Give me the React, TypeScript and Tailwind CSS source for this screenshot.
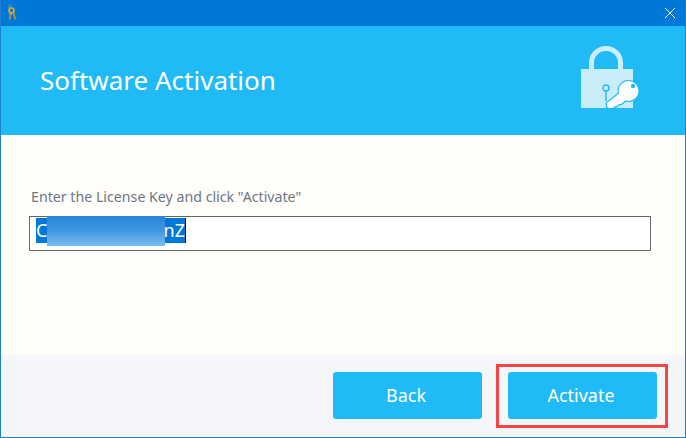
const font = { fontFamily: '"Noto Sans", "Open Sans", sans-serif' };

const KeyIcon = () => (
  <svg width="16" height="18" viewBox="0 0 16 18" className="ml-[5px]">
    <circle cx="4" cy="2.5" r="1.5" fill="none" stroke="#7d95ad" strokeWidth="1" />
    <circle cx="5.5" cy="6.5" r="2.5" fill="none" stroke="#e6a52e" strokeWidth="1.6" />
    <path d="M4 9v6.5M7.5 9l2 6.5" stroke="#c98a1f" strokeWidth="1.6" fill="none" />
    <path d="M5.5 9v2" stroke="#f2c25a" strokeWidth="0.8" fill="none" />
  </svg>
);

const keyShaft = "M41 46 L27 57 V60.5 L29 62 H33 L35 60 H37 L39 58 H41 L46 54z";

const LockIcon = () => (
  <svg width="64" height="64" viewBox="0 0 64 64" className="mt-[20px] self-start">
    <path d="M11.5 24V16.5A14.5 14 0 0 1 40.5 16.5V24" fill="none" stroke="#c9edf9" strokeWidth="5" />
    <rect x="1" y="23" width="52" height="39" fill="#c9edf9" />
    <circle cx="26" cy="42" r="3" fill="none" stroke="#20bbf6" strokeWidth="1.4" />
    <path d="M26 45v10" stroke="#20bbf6" strokeWidth="1.4" />
    <path d={keyShaft} fill="#20bbf6" stroke="#20bbf6" strokeWidth="2.5" />
    <circle cx="48.5" cy="45" r="11" fill="#20bbf6" />
    <path d={keyShaft} fill="#fff" />
    <circle cx="48.5" cy="45" r="10" fill="#fff" />
    <circle cx="53" cy="40" r="2.2" fill="#20bbf6" />
  </svg>
);

const ActionButton = ({ label }: { label: string }) => (
  <button className="w-[149px] h-[47px] pr-[3px] rounded-[3px] bg-[#20bbf6] text-white text-[18px]">
    {label}
  </button>
);

export default function App() {
  return (
    <div
      className="relative w-[686px] h-[438px] flex flex-col border-x border-b border-[#1f80d0] bg-[#fffefb] overflow-hidden"
      style={font}
    >
      <div className="h-[26px] shrink-0 flex items-center justify-between bg-[#0078d7]">
        <KeyIcon />
        <svg width="12" height="12" viewBox="0 0 12 12" className="mr-[9px]">
          <path d="M1 1l10 10M11 1L1 11" stroke="#fff" strokeWidth="1" />
        </svg>
      </div>

      <div className="h-[109px] shrink-0 flex items-center justify-between pl-[39px] pr-[41px] bg-[#20bbf6]">
        <h1 className="text-white text-[26px] font-normal">Software Activation</h1>
        <LockIcon />
      </div>

      <div className="flex-1 pt-[52px] pl-[28px] pr-[34px]">
        <p className="pl-[2px] text-[14.2px] leading-[20px] text-[#6d7684]">
          Enter the License Key and click "Activate"
        </p>
        <div className="relative mt-[9px] h-[35px] flex items-start pt-[1px] pl-[6px] border border-[#666666] bg-white">
          <span className="w-[150px] h-[25px] leading-[25px] bg-[#0078d7] border-r border-black text-white text-[18px] text-right">
            <span className="float-left">C</span>nZ
          </span>
          <div className="absolute left-[17px] -top-[1px] w-[118px] h-[30px] bg-gradient-to-b from-[#2b86d6] via-[#3f97e0] to-[#7cbcee]" />
        </div>
      </div>

      <div className="h-[82px] shrink-0 flex items-start justify-end gap-[26px] pt-[17px] pr-[28px] bg-[#f5f6fa]">
        <ActionButton label="Back" />
        <ActionButton label="Activate" />
      </div>

      <div className="absolute left-[495px] top-[364px] w-[172px] h-[64px] border-[3px] border-[#f44444]" />
    </div>
  );
}
